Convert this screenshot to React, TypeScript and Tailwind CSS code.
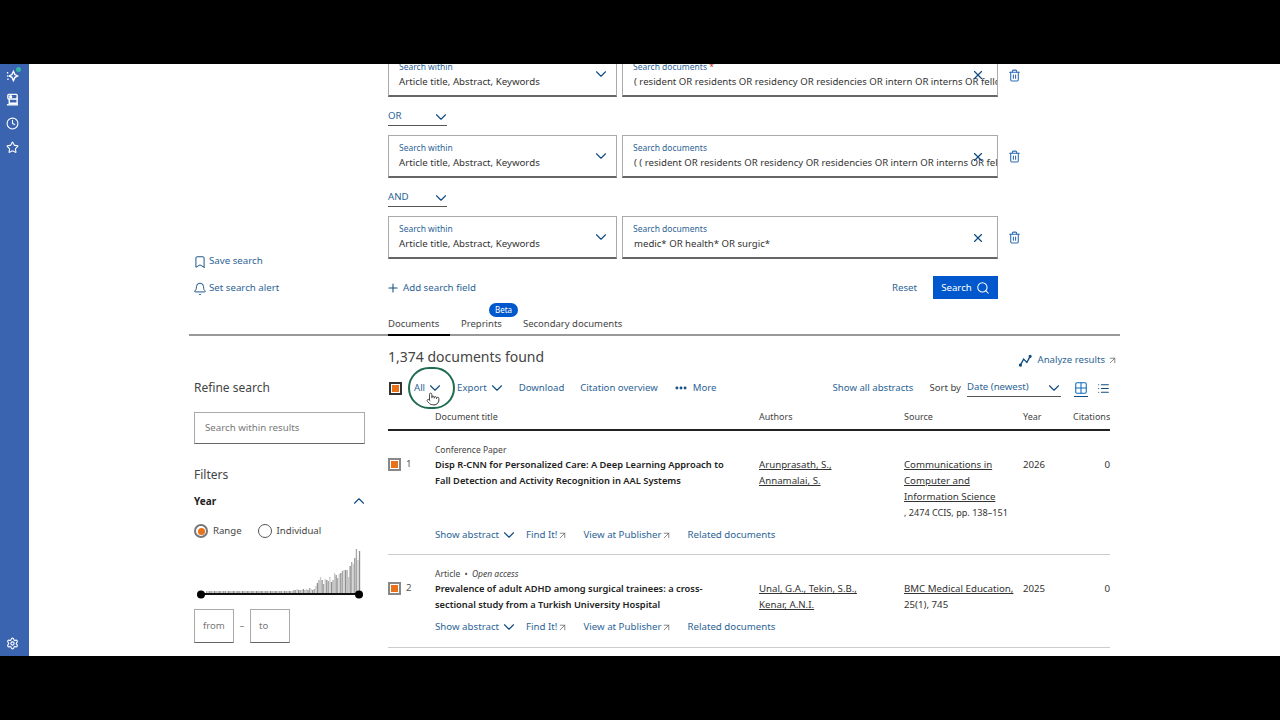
import { ArrowUpRight, Bell, Bookmark, ChevronDown, ChevronUp, Clock, Ellipsis, Grid2x2, List, Plus, Pointer, Search, Settings, Star, Trash2, X } from "lucide-react";

const q1 = "( resident OR residents OR residency OR residencies OR intern OR interns OR fellow OR fellows";
const q2 = "( ( resident OR residents OR residency OR residencies OR intern OR interns OR fellow OR fellows";

const bars = [
  1, 1, 1, 1, 1, 1, 1, 1, 1, 1, 1, 1, 1, 1, 1, 1, 1, 1, 1, 1, 1, 1, 1, 1, 1, 1, 1, 1, 1, 1, 1, 1, 1, 1, 1, 1, 1, 1, 1, 1, 1, 1, 1, 1, 1, 1, 1, 1, 1, 1, 1, 1, 1, 1,
  1, 1, 2, 2, 3, 2, 2, 2, 3, 2, 3, 2, 4, 3, 2, 3, 6, 9, 12, 15, 12, 8, 13, 12, 11, 15, 10, 12, 19, 17, 14, 18, 19, 21, 22, 22, 22, 15, 26, 30, 28, 34, 43, 32, 41,
];

function Checkbox({ dark }: { dark?: boolean }) {
  return (
    <div className={`w-[13px] h-[13px] border-2 p-px bg-white shrink-0 ${dark ? "border-[#333]" : "border-[#888]"}`}>
      <div className="w-full h-full bg-[#e8711a]" />
    </div>
  );
}

function SparkIcon() {
  return (
    <svg viewBox="0 0 14 14" className="w-[13px] h-[13px]" fill="none" stroke="white" strokeWidth="1.5">
      <path d="M8 2.5 L9.6 6 L12.5 7.5 L9.6 9 L8 12.5 L6.4 9 L3.5 7.5 L6.4 6 Z" />
      <path d="M1 4h1.4M1 7.5h1M1.4 11h1.4" />
    </svg>
  );
}

function LibraryIcon() {
  return (
    <svg viewBox="0 0 14 14" className="w-[13px] h-[13px]" fill="none" stroke="white" strokeWidth="1.5">
      <rect x="2" y="1.5" width="10" height="5" rx="1" />
      <path d="M3.5 6.5v4.5h8.5V5" />
      <path d="M1 12.7h12" />
      <circle cx="5" cy="4" r="1" fill="white" />
    </svg>
  );
}

function AnalyzeIcon() {
  return (
    <svg viewBox="0 0 14 14" className="w-[13px] h-[13px]" fill="none" stroke="#0f4c81" strokeWidth="1.4">
      <path d="M1.5 12 L5 5.5 L8.5 9 L12 2.5" />
      <circle cx="12" cy="2.5" r="1" fill="#0f4c81" />
      <circle cx="1.5" cy="12" r="1" fill="#0f4c81" />
    </svg>
  );
}

function Link2({ children }: { children: React.ReactNode }) {
  return <span className="text-[#2c6496] whitespace-nowrap">{children}</span>;
}

function Chevron({ className = "" }: { className?: string }) {
  return <ChevronDown className={`w-[18px] h-[18px] text-[#0f4c81] shrink-0 ${className}`} strokeWidth={1.5} />;
}

function SearchRow({ query, first }: { query: string; first?: boolean }) {
  return (
    <div className="flex h-[43px] items-stretch">
      <div className={`w-[229px] border border-[#aaa] border-b-2 border-b-[#666] px-[10px] flex items-center justify-between ${first ? "" : "pt-px"}`}>
        <div>
          <div className="text-[8.5px] leading-[12px] text-[#2c6496]">Search within</div>
          <div className="text-[9.7px] leading-[17px] text-[#333]">Article title, Abstract, Keywords</div>
        </div>
        <Chevron className="-mr-[4px] -mt-[2px]" />
      </div>
      <div className={`relative w-[376px] ml-[5px] border border-[#aaa] border-b-2 border-b-[#666] pl-[10px] flex items-center overflow-hidden ${first ? "" : "pt-px"}`}>
        <div className="min-w-0">
          <div className="text-[8.5px] leading-[12px] text-[#2c6496]">
            Search documents{first && <span className="text-[#c83030]"> *</span>}
          </div>
          <div className="text-[9.6px] leading-[17px] text-[#333] whitespace-nowrap pl-px">{query}</div>
        </div>
        <X className="absolute right-[12px] w-[14px] h-[14px] text-[#0f4c81]" strokeWidth={2} />
      </div>
      <div className="w-[32px] flex items-center justify-center">
        <Trash2 className="w-[13px] h-[13px] text-[#2f6db5]" strokeWidth={2} />
      </div>
    </div>
  );
}

function Connector({ label }: { label: string }) {
  return (
    <div className="h-[38px] flex items-center">
      <div className="w-[59px] h-[17px] mt-[2px] border-b border-[#555] flex items-center justify-between">
        <span className="text-[9.7px] text-[#2c6496]">{label}</span>
        <Chevron className="-mr-[3px]" />
      </div>
    </div>
  );
}

function Actions() {
  return (
    <div className="mt-[6px] h-4 ml-[47px] flex items-center text-[9.7px] leading-4">
      <Link2>Show abstract</Link2>
      <Chevron className="ml-px" />
      <span className="ml-[8px]"><Link2>Find It!</Link2></span>
      <ArrowUpRight className="w-[11px] h-[11px] text-[#555]" strokeWidth={1.5} />
      <span className="ml-[15px]"><Link2>View at Publisher</Link2></span>
      <ArrowUpRight className="w-[11px] h-[11px] text-[#555]" strokeWidth={1.5} />
      <span className="ml-[15px]"><Link2>Related documents</Link2></span>
    </div>
  );
}

export default function App() {
  return (
    <div className="w-[1280px] h-[720px] bg-black flex flex-col font-['Noto_Sans',sans-serif] overflow-hidden">
      <div className="h-16 shrink-0" />
      <div className="h-[592px] flex bg-white overflow-hidden">
        <div className="w-[29px] shrink-0 bg-[#3b64b0] flex flex-col items-center pr-[5px] -mt-px text-white">
          <div className="relative h-6 flex items-center">
            <SparkIcon />
            <div className="absolute left-[10px] top-[4px] w-[5px] h-[5px] rounded-full bg-[#35b6a8]" />
          </div>
          <div className="h-6 flex items-center"><LibraryIcon /></div>
          <div className="h-6 flex items-center"><Clock className="w-[13px] h-[13px]" strokeWidth={2} /></div>
          <div className="h-6 flex items-center"><Star className="w-[13px] h-[13px]" strokeWidth={2} /></div>
          <div className="mt-auto h-6 mb-px flex items-center"><Settings className="w-[13px] h-[13px]" strokeWidth={2} /></div>
        </div>

        <div className="ml-[160px] w-[931px] -mt-[10px] relative">
          <div className="flex items-end">
            <div className="w-[199px] pl-[5px] flex flex-col gap-[4px] text-[9.7px] text-[#2c6496] translate-y-px">
              <div className="h-[23px] flex items-center">
                <Bookmark className="w-[14px] h-[14px] -ml-[1px] text-[#0f4c81]" strokeWidth={1.6} />
                <span className="ml-[2px]">Save search</span>
              </div>
              <div className="h-[23px] flex items-center">
                <Bell className="w-[14px] h-[14px] -ml-[1px] text-[#0f4c81]" strokeWidth={1.6} />
                <span className="ml-[2px]">Set search alert</span>
              </div>
            </div>
            <div className="flex-1">
              <SearchRow query={q1} first />
              <Connector label="OR" />
              <SearchRow query={q2} />
              <Connector label="AND" />
              <SearchRow query="medic* OR health* OR surgic*" />
              <div className="mt-[17px] h-[23px] w-[610px] flex items-center text-[9.7px]">
                <Plus className="w-[14px] h-[14px] -ml-[2px] text-[#0f4c81] mr-[3px]" strokeWidth={1.8} />
                <span className="mt-[2px]"><Link2>Add search field</Link2></span>
                <span className="ml-auto mr-[16px] mt-[2px]"><Link2>Reset</Link2></span>
                <div className="w-[65px] h-[23px] bg-[#0058cc] text-white flex items-center justify-center gap-[4px]">
                  <span className="mt-[2px]">Search</span>
                  <Search className="w-[14px] h-[14px]" strokeWidth={1.8} />
                </div>
              </div>
            </div>
          </div>

          <div className="mt-[15px] border-b-2 border-[#999] pl-[199px] flex text-[9.5px] text-[#444] h-[22px]">
            <div className="w-[62px] h-[22px] border-b-2 border-black -mb-[2px] pt-[3px]">Documents</div>
            <div className="relative ml-[11px] pt-[3px]">
              Preprints
              <div className="absolute left-[28px] -top-[11px] w-[29px] h-[14px] rounded-full bg-[#0058cc] text-white text-[8px] flex items-center justify-center">Beta</div>
            </div>
            <div className="ml-[21px] pt-[3px]">Secondary documents</div>
          </div>

          <div className="flex">
            <div className="w-[199px] pl-[5px]">
              <div className="w-[171px]">
                <div className="mt-[43px] text-[12px] leading-[18px] text-[#444]">Refine search</div>
                <div className="mt-[15px] h-[32px] border border-[#aaa] border-b-[#666] pl-[10px] flex items-center text-[9.7px] text-[#777]">Search within results</div>
                <div className="mt-[22px] text-[12px] leading-[18px] text-[#444]">Filters</div>
                <div className="mt-[9px] h-4 flex items-center justify-between text-[10px] font-bold text-[#222]">
                  Year
                  <ChevronUp className="w-[18px] h-[18px] -mr-[3px] text-[#0f4c81]" strokeWidth={1.5} />
                </div>
                <div className="mt-[14px] h-4 flex items-center text-[9.6px] text-[#444]">
                  <div className="w-[14px] h-[14px] rounded-full border-2 border-[#777] flex items-center justify-center">
                    <div className="w-[7px] h-[7px] rounded-full bg-[#e8711a]" />
                  </div>
                  <span className="ml-[5px]">Range</span>
                  <div className="ml-[16px] w-[14px] h-[14px] rounded-full border border-[#555]" />
                  <span className="ml-[5px]">Individual</span>
                </div>
                <svg viewBox="0 0 171 52" className="block w-[171px] h-[52px] mt-[10px]">
                  {bars.map((h, i) => (
                    <rect key={i} x={12 + i * 1.56} y={44 - h - 1} width="1.3" height={h + 1} fill={i % 3 === 1 ? "#c9c9c9" : i % 3 === 2 ? "#8f8f8f" : "#a8a8a8"} />
                  ))}
                  <rect x="7" y="44" width="158" height="2" fill="#111" />
                  <circle cx="7" cy="45.5" r="4" fill="#000" />
                  <circle cx="165" cy="45.5" r="4" fill="#000" />
                </svg>
                <div className="mt-[8px] flex items-center text-[9.6px] text-[#777]">
                  <div className="w-[40px] h-[34px] border border-[#aaa] border-b-[#666] pl-[8px] flex items-center">from</div>
                  <div className="w-[16px] text-center">–</div>
                  <div className="w-[40px] h-[34px] border border-[#aaa] border-b-[#666] pl-[8px] flex items-center">to</div>
                </div>
              </div>
            </div>

            <div className="w-[722px] relative">
              <div className="mt-[9px] h-[22px] flex items-center justify-between">
                <div className="text-[14px] text-[#444]">1,374 documents found</div>
                <div className="flex items-center text-[9.6px] -mr-[8px] mt-[8px]">
                  <AnalyzeIcon />
                  <span className="ml-[6px]"><Link2>Analyze results</Link2></span>
                  <ArrowUpRight className="ml-[2px] w-[11px] h-[11px] text-[#555]" strokeWidth={1.5} />
                </div>
              </div>
              <div className="mt-[13px] h-4 flex items-center text-[9.6px]">
                <div className="ml-px"><Checkbox dark /></div>
                <span className="ml-[12px]"><Link2>All</Link2></span>
                <Chevron className="ml-px" />
                <span className="ml-[13px]"><Link2>Export</Link2></span>
                <Chevron className="ml-px" />
                <span className="ml-[13px]"><Link2>Download</Link2></span>
                <span className="ml-[16px]"><Link2>Citation overview</Link2></span>
                <Ellipsis className="w-[14px] h-[14px] ml-[16px] text-[#0f4c81]" strokeWidth={3} />
                <span className="ml-[5px]"><Link2>More</Link2></span>
                <span className="ml-auto"><Link2>Show all abstracts</Link2></span>
                <span className="ml-[16px] text-[#444]">Sort by</span>
                <div className="ml-[6px] w-[94px] h-[18px] border-b border-[#555] flex items-center justify-between">
                  <Link2>Date (newest)</Link2>
                  <Chevron className="-mr-[2px]" />
                </div>
                <div className="ml-[13px] border-b border-[#0f4c81] h-[17px] flex items-center">
                  <Grid2x2 className="w-[14px] h-[14px] text-[#0f6cbd]" strokeWidth={1.8} />
                </div>
                <List className="ml-[9px] w-[13px] h-[13px] text-[#0f4c81]" strokeWidth={2} />
              </div>

              <div className="mt-[13px] h-[22px] pb-[5px] border-b-2 border-[#222] grid grid-cols-[47px_324px_145px_119px_50px_37px] items-center text-[9px] text-[#444]">
                <div />
                <div>Document title</div>
                <div>Authors</div>
                <div>Source</div>
                <div>Year</div>
                <div className="text-right whitespace-nowrap">Citations</div>
              </div>

              <div className="border-b border-[#ccc] pt-[12px] pb-[11px]">
                <div className="ml-[47px] h-[14px] text-[8.5px] leading-[14px] text-[#444]">Conference Paper</div>
                <div className="grid grid-cols-[47px_324px_145px_119px_50px_37px] text-[9.7px] leading-4 text-[#333]">
                  <div className="flex items-center h-[14px] gap-[5px] text-[#555]"><Checkbox /> 1</div>
                  <div className="font-semibold text-[9.3px] text-[#222]">Disp R-CNN for Personalized Care: A Deep Learning Approach to<br />Fall Detection and Activity Recognition in AAL Systems</div>
                  <div className="underline">Arunprasath, S.,<br />Annamalai, S.</div>
                  <div className="whitespace-nowrap"><span className="underline">Communications in<br />Computer and<br />Information Science</span><br /><span className="text-[9.1px]">, 2474 CCIS, pp. 138–151</span></div>
                  <div>2026</div>
                  <div className="text-right">0</div>
                </div>
                <Actions />
              </div>

              <div className="border-b border-[#ccc] pt-[12px] pb-[12px]">
                <div className="ml-[47px] h-[14px] text-[8.5px] leading-[14px] text-[#444]">
                  Article <span className="mx-[2px]">•</span> <i>Open access</i>
                </div>
                <div className="grid grid-cols-[47px_324px_145px_119px_50px_37px] text-[9.7px] leading-4 text-[#333]">
                  <div className="flex items-center h-[14px] gap-[5px] text-[#555]"><Checkbox /> 2</div>
                  <div className="font-semibold text-[9.3px] text-[#222]">Prevalence of adult ADHD among surgical trainees: a cross-<br />sectional study from a Turkish University Hospital</div>
                  <div className="underline">Unal, G.A., Tekin, S.B.,<br />Kenar, A.N.I.</div>
                  <div className="whitespace-nowrap"><span className="underline">BMC Medical Education,</span><br />25(1), 745</div>
                  <div>2025</div>
                  <div className="text-right">0</div>
                </div>
                <Actions />
              </div>

              <div className="absolute left-[20px] top-[31px] w-[47px] h-[42px] rounded-full border-2 border-[#1f6b50]" />
              <Pointer className="absolute left-[38px] top-[55px] w-[14px] h-[16px] text-[#333] fill-white" strokeWidth={1.5} />
            </div>
          </div>
        </div>
      </div>
      <div className="h-16 shrink-0" />
    </div>
  );
}
